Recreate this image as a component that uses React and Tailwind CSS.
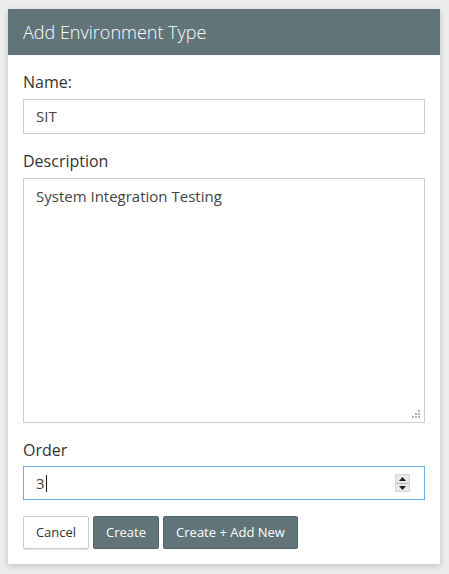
import React from "react";

const font = { fontFamily: '"Open Sans", "Liberation Sans", sans-serif' };

const Label = ({ children, className = "" }) => (
  <div className={`text-[16px] leading-[22px] text-[#333] ${className}`}>{children}</div>
);

const Spinner = () => (
  <div className="flex h-[18px] w-[15px] flex-col items-center justify-center border border-[#d6d6d6] bg-[#e9e9e9]">
    <svg width="9" height="6" viewBox="0 0 9 6" className="mb-[1px]">
      <path d="M4.5 1L8 5H1z" fill="#222" />
    </svg>
    <div className="h-px w-full bg-[#bcbcbc]" />
    <svg width="9" height="6" viewBox="0 0 9 6" className="mt-[1px]">
      <path d="M1 1h7L4.5 5z" fill="#222" />
    </svg>
  </div>
);

const Grip = () => (
  <svg width="9" height="9" viewBox="0 0 9 9" className="absolute right-[3px] bottom-[3px]">
    <rect x="6" y="0" width="2" height="2" fill="#b5b5b5" />
    <rect x="3" y="3" width="2" height="2" fill="#b5b5b5" />
    <rect x="6" y="3" width="2" height="2" fill="#b5b5b5" />
    <rect x="0" y="6" width="2" height="2" fill="#b5b5b5" />
    <rect x="3" y="6" width="2" height="2" fill="#b5b5b5" />
    <rect x="6" y="6" width="2" height="2" fill="#b5b5b5" />
  </svg>
);

export default function App() {
  return (
    <div className="min-h-[574px] bg-[#ececec] pt-[9px] pl-[8px]" style={font}>
      <div className="w-[432px] bg-white shadow-[0_2px_6px_rgba(0,0,0,0.18)]">
        {/* Header */}
        <div className="flex h-[46px] items-center bg-[#607479] px-[15px]">
          <span className="text-[18px] font-light text-white">Add Environment Type</span>
        </div>

        {/* Body */}
        <div className="px-[15px] pt-[16px] pb-[15px]">
          <Label className="mb-[6px]">Name:</Label>
          <div className="flex h-[35px] items-center border border-[#cccccc] px-[12px] text-[15px] text-[#444]">
            SIT
          </div>

          <Label className="mt-[16px] mb-[6px]">Description</Label>
          <div className="relative h-[245px] border border-[#cccccc] px-[12px] pt-[6px] text-[15px] leading-[22px] text-[#444]">
            System Integration Testing
            <Grip />
          </div>

          <Label className="mt-[16px] mb-[5px]">Order</Label>
          <div className="flex h-[34px] items-center justify-between border border-[#66afe9] pr-[14px] pl-[12px] text-[15px] text-[#444]">
            <div className="flex items-center">
              <span>3</span>
              <span className="ml-[1px] h-[17px] w-px bg-[#222]" />
            </div>
            <Spinner />
          </div>

          <div className="mt-[16px] flex gap-[4px]">
            <button className="h-[33px] w-[66px] rounded-[2px] border border-[#cccccc] bg-white text-[13px] text-[#333] shadow-[0_1px_1px_rgba(0,0,0,0.12)]">
              Cancel
            </button>
            <button className="h-[33px] w-[66px] rounded-[2px] border border-[#53656a] bg-[#607479] text-[13px] text-white">
              Create
            </button>
            <button className="h-[33px] w-[135px] rounded-[2px] border border-[#53656a] bg-[#607479] text-[13px] text-white">
              Create + Add New
            </button>
          </div>
        </div>
      </div>
    </div>
  );
}
